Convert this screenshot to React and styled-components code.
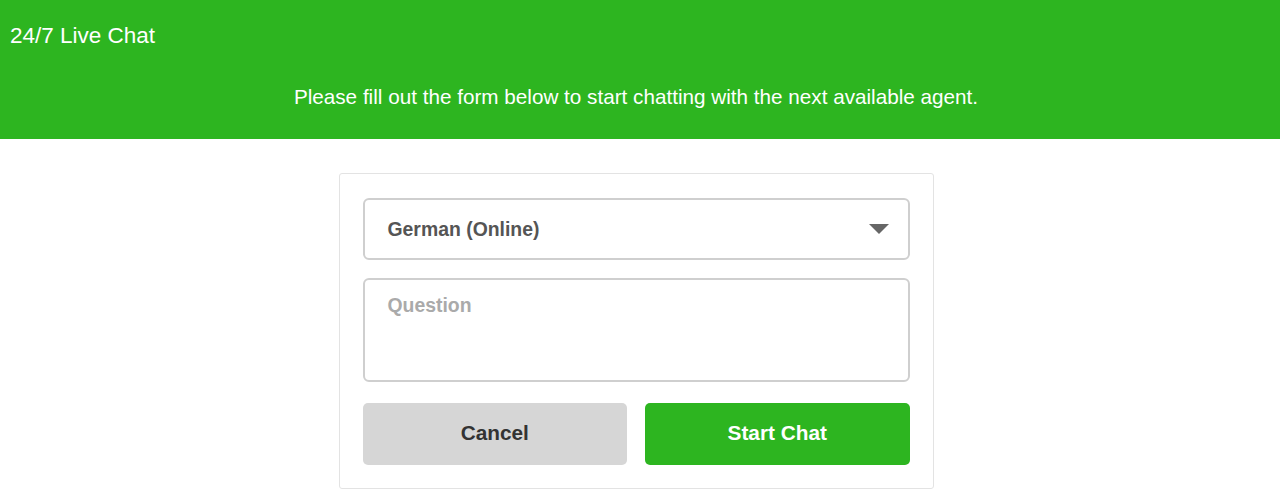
import React from "react";
import styled, { createGlobalStyle } from "styled-components";

const GREEN = "#2db520";

const Global = createGlobalStyle`
  body {
    margin: 0;
    background: #fff;
    font-family: "Liberation Sans", Arial, sans-serif;
  }
  * { box-sizing: border-box; }
`;

const Header = styled.header`
  background: ${GREEN};
  height: 139px;
  color: #fff;
  display: flex;
  flex-direction: column;
  padding: 23px 10px 0;
`;

const Title = styled.h1`
  margin: 0;
  font-size: 22.5px;
  font-weight: normal;
  line-height: 26px;
`;

const Subtitle = styled.p`
  margin: 36px 0 0;
  font-size: 20.7px;
  line-height: 24px;
  text-align: center;
  padding-right: 8px;
`;

const Main = styled.main`
  display: flex;
  justify-content: center;
  padding: 34px 8px 0 0;
`;

const Card = styled.form`
  width: 595px;
  border: 1px solid #e3e3e3;
  border-radius: 3px;
  padding: 24px 23px 23px;
  display: flex;
  flex-direction: column;
`;

const SelectBox = styled.div`
  height: 62px;
  border: 2px solid #cfcfcf;
  border-radius: 6px;
  display: flex;
  align-items: center;
  padding: 0 22px 0 23px;
  font-size: 19.4px;
  font-weight: bold;
  color: #555;
`;

const Arrow = styled.span`
  margin-left: auto;
  width: 0;
  height: 0;
  border-left: 10px solid transparent;
  border-right: 10px solid transparent;
  border-top: 10px solid #666;
  margin-right: -3px;
`;

const TextArea = styled.textarea`
  margin-top: 18px;
  height: 104px;
  border: 2px solid #cfcfcf;
  border-radius: 6px;
  padding: 14px 22px 14px 23px;
  font-family: "Liberation Sans", Arial, sans-serif;
  font-size: 19.4px;
  font-weight: bold;
  color: #555;
  resize: none;
  outline: none;
  &::placeholder {
    color: #aaa;
  }
`;

const Buttons = styled.div`
  margin-top: 21px;
  display: grid;
  grid-template-columns: 1fr 1fr;
  gap: 18px;
`;

const Button = styled.button`
  height: 62px;
  border: none;
  border-radius: 5px;
  padding: 0 0 3px;
  font-family: "Liberation Sans", Arial, sans-serif;
  font-size: 20.8px;
  font-weight: bold;
  background: ${(p) => (p.$primary ? GREEN : "#d6d6d6")};
  color: ${(p) => (p.$primary ? "#fff" : "#333")};
  cursor: pointer;
`;

export default function App() {
  return (
    <>
      <Global />
      <Header>
        <Title>24/7 Live Chat</Title>
        <Subtitle>
          Please fill out the form below to start chatting with the next available agent.
        </Subtitle>
      </Header>
      <Main>
        <Card onSubmit={(e) => e.preventDefault()}>
          <SelectBox>
            German (Online)
            <Arrow />
          </SelectBox>
          <TextArea placeholder="Question" />
          <Buttons>
            <Button type="button">Cancel</Button>
            <Button type="submit" $primary>
              Start Chat
            </Button>
          </Buttons>
        </Card>
      </Main>
    </>
  );
}
